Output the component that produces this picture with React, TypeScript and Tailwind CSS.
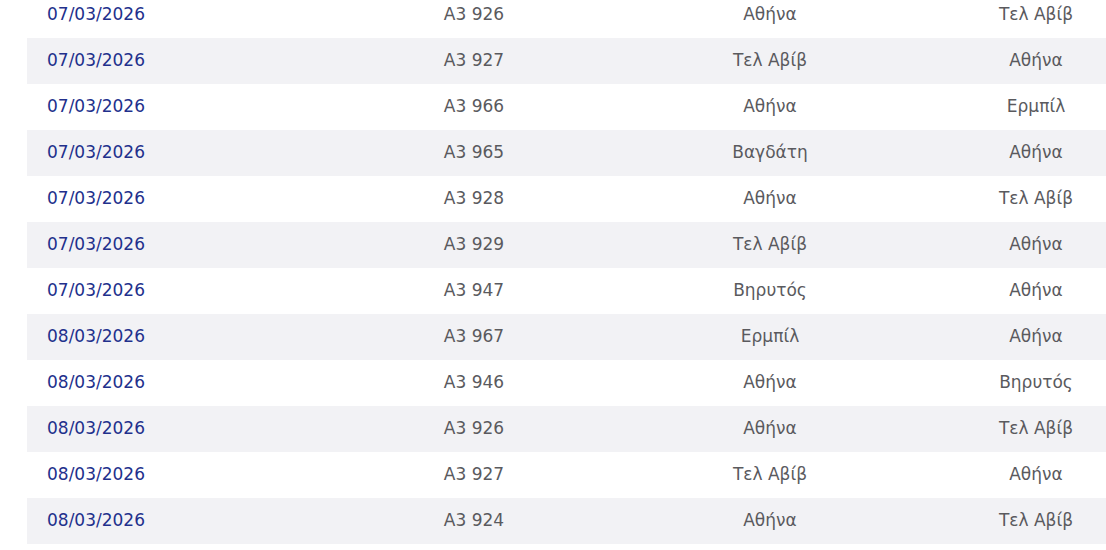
import React from 'react';

const flights = [
  { date: '07/03/2026', code: 'A3 926', from: 'Αθήνα', to: 'Τελ Αβίβ' },
  { date: '07/03/2026', code: 'A3 927', from: 'Τελ Αβίβ', to: 'Αθήνα' },
  { date: '07/03/2026', code: 'A3 966', from: 'Αθήνα', to: 'Ερμπίλ' },
  { date: '07/03/2026', code: 'A3 965', from: 'Βαγδάτη', to: 'Αθήνα' },
  { date: '07/03/2026', code: 'A3 928', from: 'Αθήνα', to: 'Τελ Αβίβ' },
  { date: '07/03/2026', code: 'A3 929', from: 'Τελ Αβίβ', to: 'Αθήνα' },
  { date: '07/03/2026', code: 'A3 947', from: 'Βηρυτός', to: 'Αθήνα' },
  { date: '08/03/2026', code: 'A3 967', from: 'Ερμπίλ', to: 'Αθήνα' },
  { date: '08/03/2026', code: 'A3 946', from: 'Αθήνα', to: 'Βηρυτός' },
  { date: '08/03/2026', code: 'A3 926', from: 'Αθήνα', to: 'Τελ Αβίβ' },
  { date: '08/03/2026', code: 'A3 927', from: 'Τελ Αβίβ', to: 'Αθήνα' },
  { date: '08/03/2026', code: 'A3 924', from: 'Αθήνα', to: 'Τελ Αβίβ' },
];

export default function App() {
  return (
    <div className="h-[550px] w-[1106px] overflow-hidden bg-white font-['DejaVu_Sans',sans-serif]">
      <div className="-mt-[8px] ml-[27px] w-[1127px]">
        {flights.map((f, i) => (
          <div
            key={i}
            className={
              'grid h-[46px] grid-cols-[299px_296px_296px_236px] items-center text-[17px] font-normal text-[#5a5a5e] ' +
              (i % 2 === 1 ? 'bg-[#f2f2f5]' : 'bg-white')
            }
          >
            <span className="pl-[20px] text-[#22308c]">{f.date}</span>
            <span className="text-center">{f.code}</span>
            <span className="text-center">{f.from}</span>
            <span className="text-center">{f.to}</span>
          </div>
        ))}
      </div>
    </div>
  );
}
